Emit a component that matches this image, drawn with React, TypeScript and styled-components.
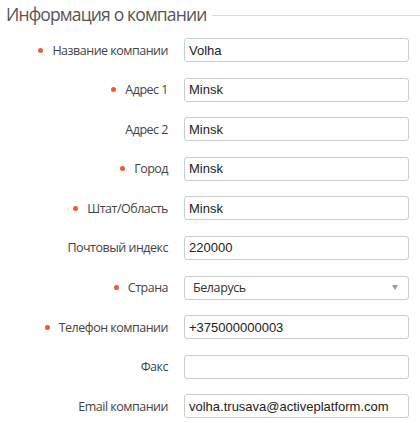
import React from "react";
import styled, { createGlobalStyle } from "styled-components";

const Global = createGlobalStyle`
  html, body { margin: 0; padding: 0; background: #fff; }
  body { font-family: "Open Sans", sans-serif; }
`;

const Fieldset = styled.section`
  width: 420px;
  padding: 0;
  box-sizing: border-box;
`;

const Legend = styled.div`
  display: flex;
  align-items: center;
  padding: 1px 0 0 6px;
  height: 26px;
  font-size: 17.5px;
  letter-spacing: -0.85px;
  color: #555;
  font-weight: 400;
  white-space: nowrap;
  &::after {
    content: "";
    flex: 1;
    height: 1px;
    background: #ddd;
    margin-left: 5px;
    margin-top: 2px;
  }
`;

const Grid = styled.div`
  display: grid;
  grid-template-columns: 168px 225px;
  column-gap: 16px;
  row-gap: 15.6px;
  padding-top: 11px;
`;

const Label = styled.label<{ $required?: boolean }>`
  display: flex;
  align-items: center;
  justify-content: flex-end;
  height: 24px;
  font-size: 12.5px;
  letter-spacing: -0.5px;
  color: #444;
  white-space: nowrap;
  &::before {
    content: "";
    display: ${(p) => (p.$required ? "block" : "none")};
    width: 5px;
    height: 5px;
    border-radius: 50%;
    background: #f15a2b;
    margin-right: 9px;
  }
`;

const Input = styled.div`
  height: 24px;
  box-sizing: border-box;
  border: 1px solid #c8cdd2;
  border-radius: 3px;
  padding: 0 4px;
  display: flex;
  align-items: center;
  font-family: "Liberation Sans", Arial, sans-serif;
  font-size: 13px;
  color: #222;
`;

const Select = styled(Input)`
  font-family: "Open Sans", sans-serif;
  font-size: 12.5px;
  letter-spacing: -0.4px;
  padding: 0 8px;
  justify-content: space-between;
  color: #333;
`;

const Arrow = styled.span`
  width: 0;
  height: 0;
  border-left: 3.5px solid transparent;
  border-right: 3.5px solid transparent;
  border-top: 5px solid #999;
  margin-right: 2px;
`;

type Field = { label: string; value: string; required?: boolean; select?: boolean };

const fields: Field[] = [
  { label: "Название компании", value: "Volha", required: true },
  { label: "Адрес 1", value: "Minsk", required: true },
  { label: "Адрес 2", value: "Minsk" },
  { label: "Город", value: "Minsk", required: true },
  { label: "Штат/Область", value: "Minsk", required: true },
  { label: "Почтовый индекс", value: "220000" },
  { label: "Страна", value: "Беларусь", required: true, select: true },
  { label: "Телефон компании", value: "+375000000003", required: true },
  { label: "Факс", value: "" },
  { label: "Email компании", value: "volha.trusava@activeplatform.com" },
];

export default function App() {
  return (
    <>
      <Global />
      <Fieldset>
        <Legend>Информация о компании</Legend>
        <Grid>
          {fields.map((f) => (
            <React.Fragment key={f.label}>
              <Label $required={f.required}>{f.label}</Label>
              {f.select ? (
                <Select>
                  {f.value}
                  <Arrow />
                </Select>
              ) : (
                <Input>{f.value}</Input>
              )}
            </React.Fragment>
          ))}
        </Grid>
      </Fieldset>
    </>
  );
}
